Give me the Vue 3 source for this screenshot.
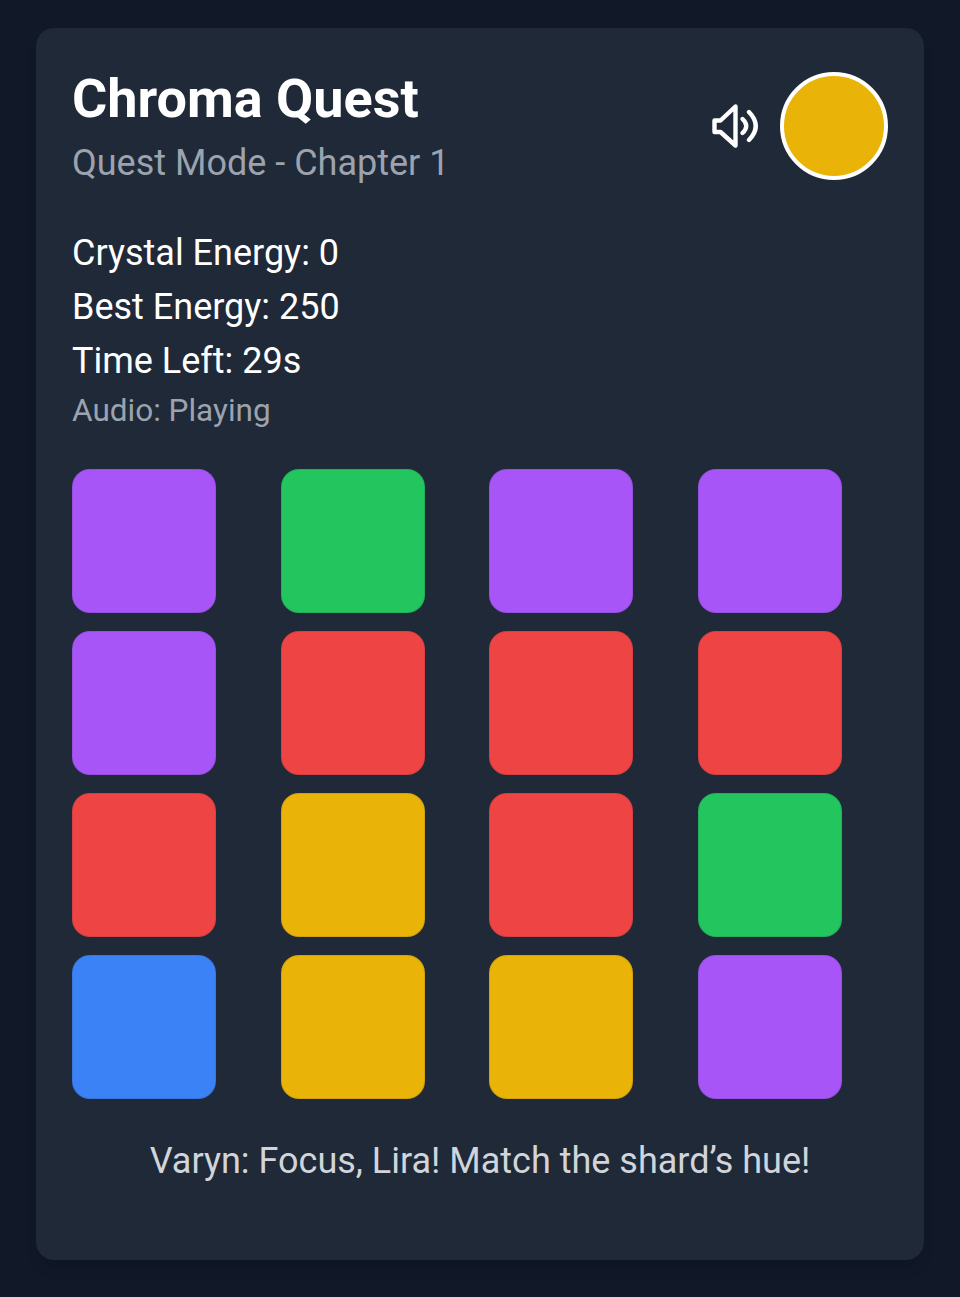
<script setup>
const colors = { p: "#a855f7", g: "#22c55e", r: "#ef4444", y: "#eab308", b: "#3b82f6" };
const tiles = "pgpp prrr ryrg byyp".replace(/ /g, "").split("").map((c) => colors[c]);
</script>

<template>
  <div class="page">
    <div class="card">
      <div class="header">
        <div>
          <h1>Chroma Quest</h1>
          <p class="sub">Quest Mode - Chapter 1</p>
        </div>
        <div class="controls">
          <button class="sound" aria-label="Sound">
            <svg width="48" height="48" viewBox="0 0 48 48" fill="none" stroke="#fff" stroke-width="4.4" stroke-linecap="round" stroke-linejoin="round">
              <path d="M23.5 4.5 L8.5 18.5 H2.5 V30 H8.5 L23.5 43.5 Z" />
              <path d="M30.5 17 Q38 24 30.5 31" />
              <path d="M37 10 Q50.5 24 37 38" />
            </svg>
          </button>
          <div class="shard"></div>
        </div>
      </div>
      <div class="stats">
        <p>Crystal Energy: 0</p>
        <p>Best Energy: 250</p>
        <p>Time Left: 29s</p>
        <p class="audio">Audio: Playing</p>
      </div>
      <div class="grid">
        <div v-for="(c, i) in tiles" :key="i" class="tile" :style="{ background: c }"></div>
      </div>
      <p class="line">Varyn: Focus, Lira! Match the shard’s hue!</p>
    </div>
  </div>
</template>

<style>
body {
  background: #111827;
}
</style>

<style scoped>
.page {
  height: 1297px;
  box-sizing: border-box;
  padding: 28px 36px 0;
  background: #111827;
  font-family: Roboto, sans-serif;
  overflow: hidden;
}
.card {
  height: 1232px;
  box-sizing: border-box;
  padding: 35.5px 36px 36px;
  background: #1f2937;
  border-radius: 18px;
  box-shadow: 0 10px 15px -3px rgba(0, 0, 0, 0.1), 0 4px 6px -4px rgba(0, 0, 0, 0.1);
  color: #fff;
}
.header {
  display: flex;
  justify-content: space-between;
  align-items: center;
}
h1 {
  margin: -1px 0 1px;
  font-size: 54px;
  line-height: 72px;
  font-weight: 700;
}
.sub {
  margin: 0;
  font-size: 36px;
  line-height: 54px;
  color: #9ca3af;
}
.controls {
  display: flex;
  align-items: center;
  gap: 20px;
  margin-top: -1px;
}
.sound {
  display: flex;
  padding: 0;
  background: none;
  border: none;
}
.shard {
  width: 108px;
  height: 108px;
  box-sizing: border-box;
  border-radius: 50%;
  background: #eab308;
  border: 4px solid #fff;
}
.stats {
  margin-top: 36px;
}
.stats p {
  margin: 0;
  font-size: 36px;
  line-height: 54px;
}
.stats .audio {
  font-size: 31.5px;
  line-height: 45px;
  color: #9ca3af;
}
.grid {
  display: grid;
  grid-template-columns: repeat(4, 1fr);
  gap: 18px;
  margin-top: 36px;
}
.tile {
  width: 144px;
  height: 144px;
  box-sizing: border-box;
  border-radius: 18px;
  border: 1px solid rgba(31, 41, 55, 0.12);
}
.line {
  margin: 35.5px 0 0;
  font-size: 36px;
  line-height: 54px;
  text-align: center;
  color: #d1d5db;
}
</style>
